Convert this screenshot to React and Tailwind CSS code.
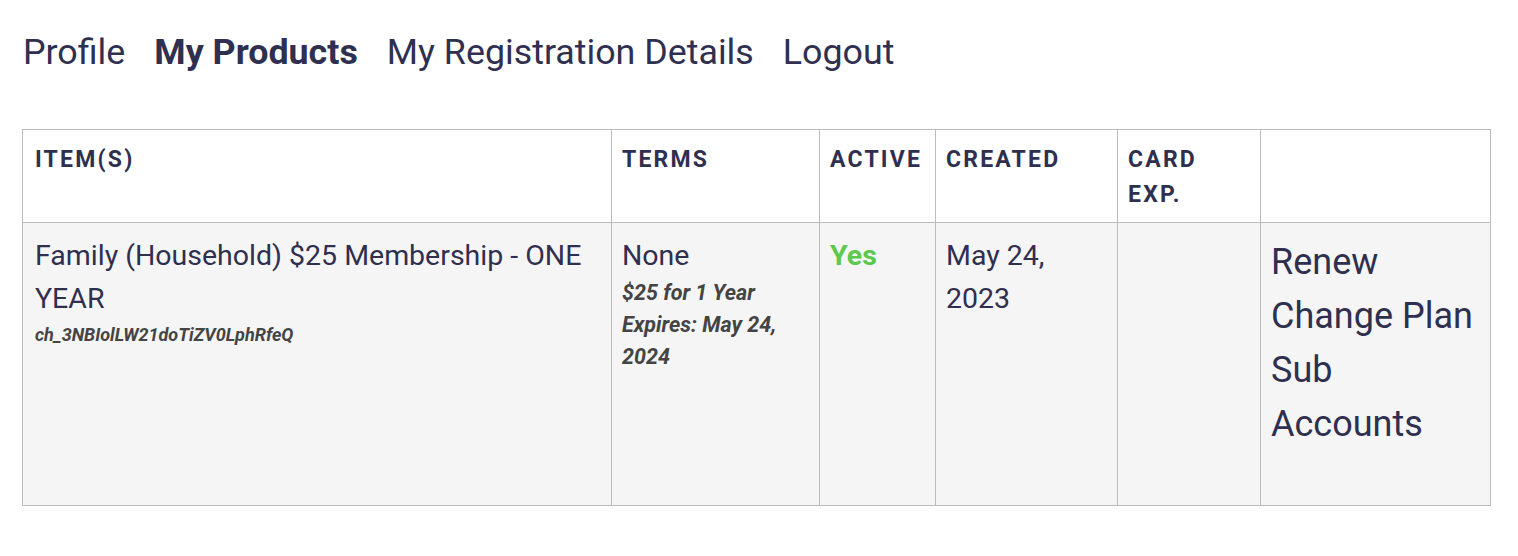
import React from 'react';

const navItems = [
  { label: 'Profile', active: false },
  { label: 'My Products', active: true },
  { label: 'My Registration Details', active: false },
  { label: 'Logout', active: false },
];

const headers = ['ITEM(S)', 'TERMS', 'ACTIVE', 'CREATED', 'CARD EXP.', ''];

export default function App() {
  return (
    <div className="bg-white min-h-screen text-[#2f2f4f]" style={{ fontFamily: 'Roboto, "Liberation Sans", sans-serif' }}>
      {/* account nav */}
      <nav className="flex gap-[29px] pl-[23px] pt-[30px] text-[35.8px] leading-[44px]">
        {navItems.map(item => (
          <a key={item.label} className={item.active ? 'font-bold' : ''}>
            {item.label}
          </a>
        ))}
      </nav>

      <div className="pl-[22px] pr-[27px] pt-[55px]">
        <table className="w-full border-collapse border border-[#bcbcbc] table-fixed">
          <colgroup>
            <col className="w-[589px]" />
            <col className="w-[208px]" />
            <col className="w-[116px]" />
            <col className="w-[182px]" />
            <col className="w-[143px]" />
            <col />
          </colgroup>
          <thead>
            <tr>
              {headers.map((h, i) => (
                <th
                  key={i}
                  className={`border border-[#bcbcbc] text-left align-top pr-[11px] pt-3 pb-[10px] text-[23px] leading-[35px] font-bold tracking-[2.2px] ${i === 0 ? 'pl-3' : 'pl-[10px]'}`}
                >
                  {h}
                </th>
              ))}
            </tr>
          </thead>
          <tbody>
            <tr className="bg-[#f5f5f5] align-top">
              <td className="border border-[#bcbcbc] pl-3 pr-[11px] pt-[11px] text-[28.5px] leading-[43px]">
                Family (Household) $25 Membership - ONE YEAR
                <div className="text-[18px] leading-[30px] italic font-bold text-[#444]">ch_3NBIolLW21doTiZV0LphRfeQ</div>
              </td>
              <td className="border border-[#bcbcbc] pl-[10px] pr-[11px] pt-[11px] text-[28.5px] leading-[43px]">
                None
                <div className="text-[21.5px] leading-[32px] italic font-bold text-[#444]">
                  $25 for 1 Year
                  <br />
                  Expires: May 24, 2024
                </div>
              </td>
              <td className="border border-[#bcbcbc] pl-[10px] pr-[11px] pt-[11px] text-[28.5px] leading-[43px] font-bold text-[#5cc94e]">Yes</td>
              <td className="border border-[#bcbcbc] pl-[10px] pr-[11px] pt-[11px] text-[28.5px] leading-[43px]">May 24, 2023</td>
              <td className="border border-[#bcbcbc] pl-[10px] pr-[11px] pt-3"></td>
              <td className="border border-[#bcbcbc] pl-[10px] pr-[11px] pt-3 pb-[54px] text-[36px] leading-[54px]">
                <a className="block">Renew</a>
                <a className="block">Change Plan</a>
                <a className="block">Sub Accounts</a>
              </td>
            </tr>
          </tbody>
        </table>
      </div>
    </div>
  );
}
